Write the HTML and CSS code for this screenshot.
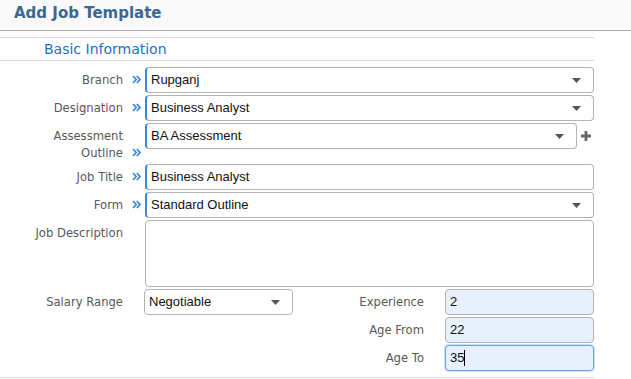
FILE: index.html
```html
<!DOCTYPE html>
<html lang="en">
  <head>
    <meta charset="UTF-8" />
    <meta name="viewport" content="width=device-width, initial-scale=1.0" />
    <title>Add Job Template</title>
    <link rel="stylesheet" href="styles.css">
  </head>
  <body>
    <div class="page-header">
      <h1 class="page-title">Add Job Template</h1>
    </div>

    <div class="panel">
      <h2 class="section-title">Basic Information</h2>

      <div class="form">
        <div class="form-row">
          <label class="form-label">Branch<span class="req"><svg width="9" height="9" viewBox="0 0 9 9"><path d="M1 1l3.2 3.5L1 8M4.8 1L8 4.5 4.8 8" /></svg></span></label>
          <div class="field select required">
            <span class="field-text">Rupganj</span>
            <svg class="caret" width="9" height="5" viewBox="0 0 9 5"><path d="M0 0h9L4.5 5z" /></svg>
          </div>
        </div>

        <div class="form-row">
          <label class="form-label">Designation<span class="req"><svg width="9" height="9" viewBox="0 0 9 9"><path d="M1 1l3.2 3.5L1 8M4.8 1L8 4.5 4.8 8" /></svg></span></label>
          <div class="field select required">
            <span class="field-text">Business Analyst</span>
            <svg class="caret" width="9" height="5" viewBox="0 0 9 5"><path d="M0 0h9L4.5 5z" /></svg>
          </div>
        </div>

        <div class="form-row">
          <label class="form-label">Assessment<br />Outline<span class="req"><svg width="9" height="9" viewBox="0 0 9 9"><path d="M1 1l3.2 3.5L1 8M4.8 1L8 4.5 4.8 8" /></svg></span></label>
          <div class="field select required">
            <span class="field-text">BA Assessment</span>
            <svg class="caret" width="9" height="5" viewBox="0 0 9 5"><path d="M0 0h9L4.5 5z" /></svg>
          </div>
          <button class="add-btn" type="button">
            <svg width="10" height="10" viewBox="0 0 10 10"><path d="M3.6 0h2.8v3.6H10v2.8H6.4V10H3.6V6.4H0V3.6h3.6z" /></svg>
          </button>
        </div>

        <div class="form-row">
          <label class="form-label">Job Title<span class="req"><svg width="9" height="9" viewBox="0 0 9 9"><path d="M1 1l3.2 3.5L1 8M4.8 1L8 4.5 4.8 8" /></svg></span></label>
          <div class="field required">
            <span class="field-text">Business Analyst</span>
          </div>
        </div>

        <div class="form-row">
          <label class="form-label">Form<span class="req"><svg width="9" height="9" viewBox="0 0 9 9"><path d="M1 1l3.2 3.5L1 8M4.8 1L8 4.5 4.8 8" /></svg></span></label>
          <div class="field select required">
            <span class="field-text">Standard Outline</span>
            <svg class="caret" width="9" height="5" viewBox="0 0 9 5"><path d="M0 0h9L4.5 5z" /></svg>
          </div>
        </div>

        <div class="form-row">
          <label class="form-label">Job Description</label>
          <div class="field textarea"></div>
        </div>

        <div class="split-row">
          <div class="form-row">
            <label class="form-label">Salary Range</label>
            <div class="field select salary">
              <span class="field-text">Negotiable</span>
              <svg class="caret" width="9" height="5" viewBox="0 0 9 5"><path d="M0 0h9L4.5 5z" /></svg>
            </div>
          </div>

          <div class="side-fields">
            <label class="side-label">Experience</label>
            <div class="field filled"><span class="field-text">2</span></div>
            <label class="side-label">Age From</label>
            <div class="field filled"><span class="field-text">22</span></div>
            <label class="side-label">Age To</label>
            <div class="field filled focused"><span class="field-text">35</span><span class="cursor"></span></div>
          </div>
        </div>
      </div>
    </div>
  </body>
</html>
```

FILE: styles.css
```css
:root {
  --label: #585858;
  --border: #b3b3b3;
  --line: #dcdce8;
  --blue: #2f8ae6;
  --title: #3a6794;
}

* {
  box-sizing: border-box;
}

body {
  margin: 0;
  font-family: "DejaVu Sans", sans-serif;
  font-size: 11.6px;
  color: #111111;
  background-color: #ffffff;
}

.page-header {
  height: 31px;
  padding: 3px 14px 0;
  background-color: #fafafa;
  border-bottom: 1px solid #aaaaaa;
}

.page-title {
  margin: 0;
  font-size: 15px;
  line-height: 20px;
  font-weight: bold;
  color: var(--title);
}

.panel {
  width: 594px;
  margin-top: 6px;
}

.section-title {
  margin: 0;
  height: 24px;
  padding-left: 44px;
  border-top: 1px solid var(--line);
  border-bottom: 1px solid var(--line);
  font-size: 14px;
  font-weight: normal;
  line-height: 22px;
  color: #1f6fc5;
}

.form {
  display: flex;
  flex-direction: column;
  gap: 2px;
  padding: 6px 0 6px;
  border-bottom: 1px solid var(--line);
}

.form-row {
  display: flex;
  align-items: flex-start;
}

.form-label {
  flex: 0 0 145px;
  padding: 5px 22px 0 0;
  text-align: right;
  line-height: 17px;
  color: var(--label);
}

.req {
  display: inline-block;
  width: 22px;
  margin-right: -22px;
  padding-left: 9px;
  text-align: left;
}

.req svg {
  fill: none;
  stroke: var(--blue);
  stroke-width: 1.7;
}

.field {
  flex: 1;
  display: flex;
  align-items: center;
  height: 26px;
  padding: 0 12px 0 4px;
  border: 1px solid var(--border);
  border-radius: 4px;
  background-color: #ffffff;
  font-family: "Liberation Sans", Arial, sans-serif;
  font-size: 13px;
  line-height: 24px;
}

.field.required {
  border-left: 2px solid var(--blue);
  padding-left: 4px;
}

.field-text {
  flex: 1;
  white-space: nowrap;
}

.caret {
  fill: #555555;
}

.add-btn {
  flex: 0 0 17px;
  height: 26px;
  padding: 0 0 0 4px;
  border: none;
  background: none;
  display: flex;
  align-items: center;
}

.add-btn svg {
  fill: #666666;
}

.textarea {
  height: 67px;
}

.split-row {
  display: flex;
  justify-content: space-between;
}

.salary {
  flex: 0 0 149px;
  margin-left: -1px;
}

.side-fields {
  display: grid;
  grid-template-columns: 100px 149px;
  row-gap: 2px;
}

.side-label {
  padding: 5px 21px 0 0;
  text-align: right;
  line-height: 17px;
  color: var(--label);
}

.filled {
  background-color: #e8f0fe;
}

.focused {
  border-color: #6aa3ea;
  box-shadow: 0 0 0 1px rgba(106, 163, 234, 0.35);
}

.focused .field-text {
  flex: 0 0 auto;
}

.cursor {
  width: 1px;
  height: 16px;
  background-color: #000000;
}
```
